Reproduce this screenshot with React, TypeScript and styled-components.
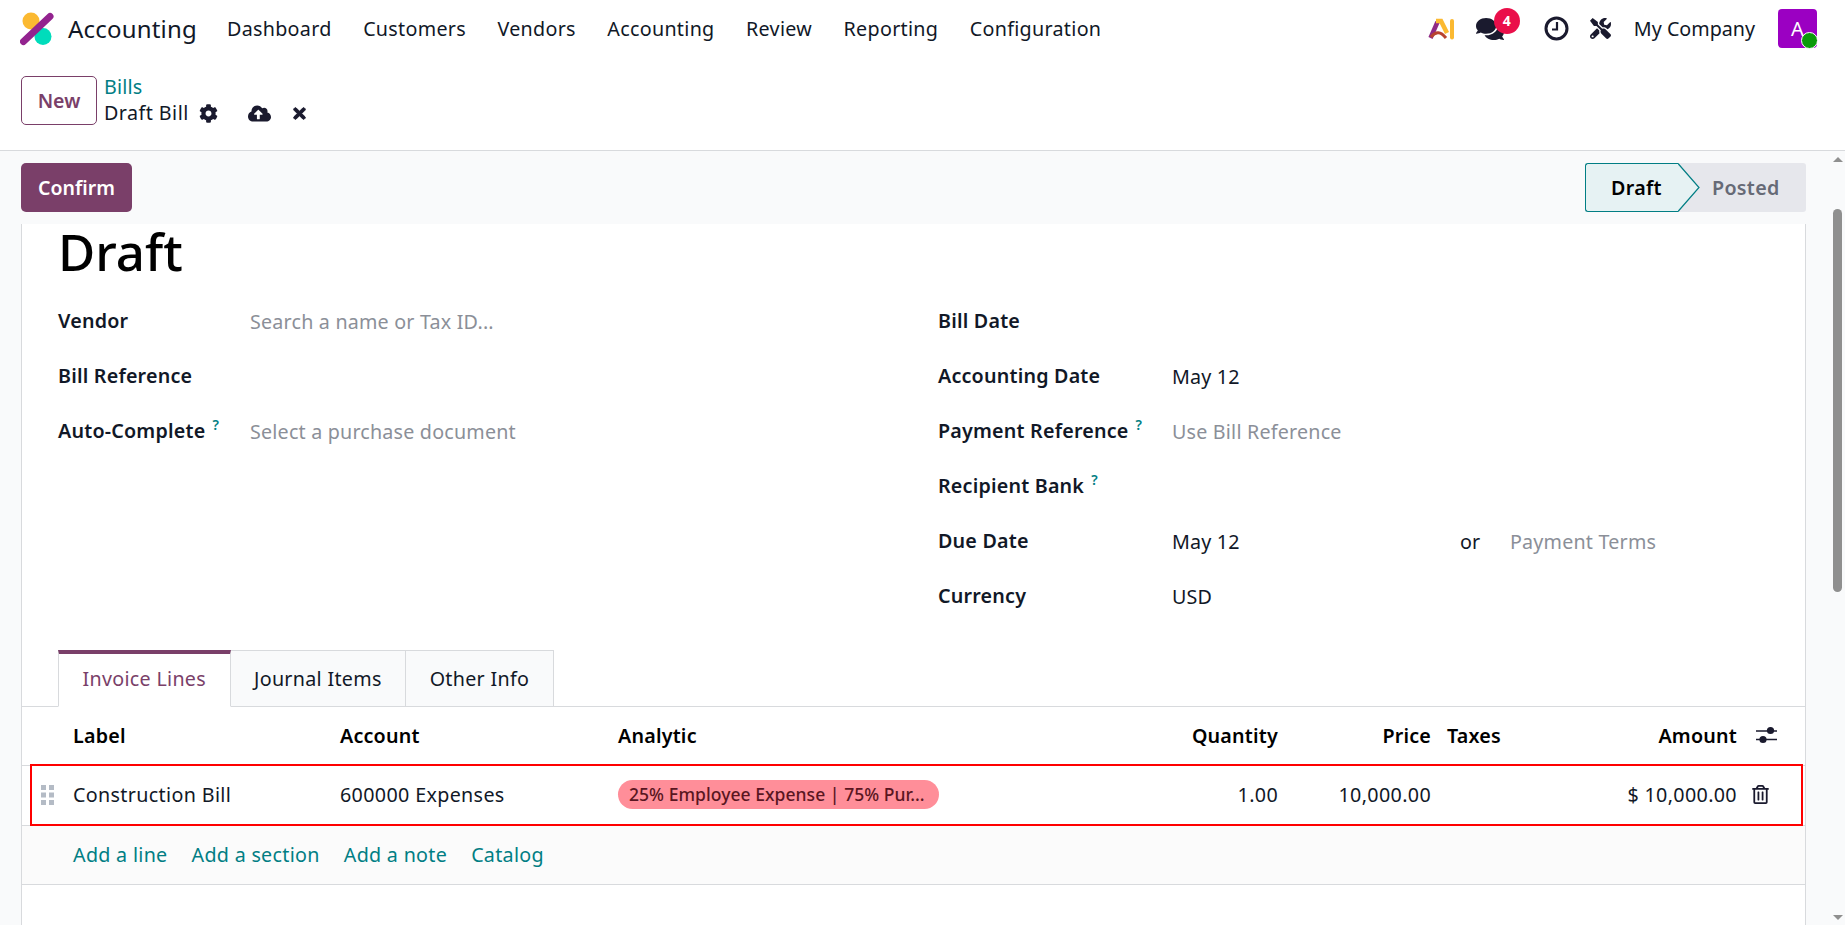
import styled, { createGlobalStyle } from 'styled-components';
import { FaCog, FaCloudUploadAlt, FaTimes, FaComments, FaTools, FaRegTrashAlt } from 'react-icons/fa';

const PRIMARY = '#7a3f69';
const TEAL = '#017e84';
const INK = '#111827';
const LINE = '#d8dadd';

const GlobalStyle = createGlobalStyle`
    html, body {
        margin: 0;
        padding: 0;
        height: 100%;
        overflow: hidden;
        background: #fff;
    }
    body {
        font-family: "Noto Sans", "Open Sans", sans-serif;
        font-size: 19.7px;
        letter-spacing: 0.2px;
        color: ${INK};
    }
    * {
        box-sizing: border-box;
    }
`;

const NAV_LINKS = [
    'Dashboard',
    'Customers',
    'Vendors',
    'Accounting',
    'Review',
    'Reporting',
    'Configuration',
];

const LEFT_FIELDS = [
    { label: 'Vendor', placeholder: 'Search a name or Tax ID...' },
    { label: 'Bill Reference' },
    { label: 'Auto-Complete', help: true, placeholder: 'Select a purchase document' },
];

const RIGHT_FIELDS = [
    { label: 'Bill Date' },
    { label: 'Accounting Date', value: 'May 12' },
    { label: 'Payment Reference', help: true, placeholder: 'Use Bill Reference' },
    { label: 'Recipient Bank', help: true },
];

type FieldProps = {
    label: string;
    help?: boolean;
    value?: string;
    placeholder?: string;
};

// one label + value row of the form
function Field({ label, help, value, placeholder }: FieldProps) {
    return (
        <FieldRow>
            <FieldLabel>
                {label}
                {help && <Help>?</Help>}
            </FieldLabel>
            {value && <Value>{value}</Value>}
            {placeholder && <Placeholder>{placeholder}</Placeholder>}
        </FieldRow>
    );
}

function Logo() {
    return (
        <svg width="36" height="36" viewBox="0 0 36 36">
            <circle cx="11" cy="10" r="8.5" fill="#fbb931" />
            <circle cx="23" cy="25.5" r="8.5" fill="#00dcbb" />
            <path d="M3.5 30.5 L30 5.5" stroke="#93238f" strokeWidth="7" strokeLinecap="round" />
        </svg>
    );
}

function AiLogo() {
    return (
        <svg width="27" height="22" viewBox="0 0 27 22">
            <path d="M2.5 20 L9.5 4" fill="none" stroke="#8f2a86" strokeWidth="4.5" />
            <path d="M8 3 L13 3 L19 15" fill="none" stroke="#fbb931" strokeWidth="4.5" />
            <path d="M3 19 Q10 10 18 20" fill="none" stroke="#b8432f" strokeWidth="3" />
            <path d="M24 3 L24 19.5" stroke="#fbb931" strokeWidth="4" strokeLinecap="round" />
        </svg>
    );
}

function ClockIcon() {
    return (
        <svg width="25" height="25" viewBox="0 0 25 25">
            <circle cx="12.5" cy="12.5" r="10.5" fill="none" stroke="#1a1a2e" strokeWidth="3" />
            <path d="M13 6 L13 13.5 L8 13.5" fill="none" stroke="#1a1a2e" strokeWidth="2.2" />
        </svg>
    );
}

function SlidersIcon() {
    return (
        <svg width="22" height="20" viewBox="0 0 22 20">
            <path d="M0 6 H21 M0 14.5 H21" stroke="#1a1a2e" strokeWidth="1.6" />
            <circle cx="14.5" cy="5.5" r="3.6" fill="#1a1a2e" />
            <circle cx="7" cy="14.5" r="3.6" fill="#1a1a2e" />
        </svg>
    );
}

function GripIcon() {
    return (
        <svg width="13" height="20" viewBox="0 0 13 20" fill="#b4bbc5">
            <rect x="0" y="0" width="5" height="5" />
            <rect x="8" y="0" width="5" height="5" />
            <rect x="0" y="7.5" width="5" height="5" />
            <rect x="8" y="7.5" width="5" height="5" />
            <rect x="0" y="15" width="5" height="5" />
            <rect x="8" y="15" width="5" height="5" />
        </svg>
    );
}

const App = () => {
    return (
        <Page>
            <GlobalStyle />
            <Header>
                <Nav>
                    <Brand>
                        <Logo />
                        <BrandName>Accounting</BrandName>
                    </Brand>
                    <NavLinks>
                        {NAV_LINKS.map((link) => (
                            <span key={link}>{link}</span>
                        ))}
                    </NavLinks>
                    <Systray>
                        <AiSlot>
                            <AiLogo />
                        </AiSlot>
                        <ChatSlot>
                            <FaComments size={28} color="#1a1a2e" />
                            <Badge>4</Badge>
                        </ChatSlot>
                        <ClockSlot>
                            <ClockIcon />
                        </ClockSlot>
                        <ToolsSlot>
                            <FaTools size={21} color="#1a1a2e" />
                        </ToolsSlot>
                        <span>My Company</span>
                        <Avatar>
                            A<Presence />
                        </Avatar>
                    </Systray>
                </Nav>
                <ControlPanel>
                    <NewButton>New</NewButton>
                    <Breadcrumb>
                        <BreadcrumbLink>Bills</BreadcrumbLink>
                        <BreadcrumbCurrent>
                            Draft Bill
                            <FaCog size={19} color="#1a1a2e" />
                            <CloudIcon size={23} color="#1a1a2e" />
                            <FaTimes size={17} color="#1a1a2e" stroke="#1a1a2e" strokeWidth={30} />
                        </BreadcrumbCurrent>
                    </Breadcrumb>
                </ControlPanel>
            </Header>
            <Body>
                <Content>
                    <StatusRow>
                        <ConfirmButton>Confirm</ConfirmButton>
                        <StatusBar>
                            <DraftStep>
                                Draft
                                <svg width="22" height="49" viewBox="0 0 22 49">
                                    <path d="M0 0.5 L21 24.5 L0 48.5" fill="#e6f2f3" stroke={TEAL} strokeWidth="1.2" />
                                </svg>
                            </DraftStep>
                            <PostedStep>Posted</PostedStep>
                        </StatusBar>
                    </StatusRow>
                    <Sheet>
                        <Title>Draft</Title>
                        <FormGrid>
                            <FormGroup $labelWidth={192}>
                                {LEFT_FIELDS.map((field) => (
                                    <Field key={field.label} {...field} />
                                ))}
                            </FormGroup>
                            <FormGroup $labelWidth={234}>
                                {RIGHT_FIELDS.map((field) => (
                                    <Field key={field.label} {...field} />
                                ))}
                                <FieldRow>
                                    <FieldLabel>Due Date</FieldLabel>
                                    <DueDate>
                                        <Value>May 12</Value>
                                        <Value>or</Value>
                                        <Placeholder>Payment Terms</Placeholder>
                                    </DueDate>
                                </FieldRow>
                                <Field label="Currency" value="USD" />
                            </FormGroup>
                        </FormGrid>
                        <Tabs>
                            <Tab $active>Invoice Lines</Tab>
                            <Tab>Journal Items</Tab>
                            <Tab>Other Info</Tab>
                        </Tabs>
                        <LinesHead>
                            <span />
                            <span>Label</span>
                            <span>Account</span>
                            <span>Analytic</span>
                            <RightCell>Quantity</RightCell>
                            <RightCell>Price</RightCell>
                            <TaxCell>Taxes</TaxCell>
                            <RightCell>Amount</RightCell>
                            <ActionCell>
                                <SlidersIcon />
                            </ActionCell>
                        </LinesHead>
                        <LineRow>
                            <HandleCell>
                                <GripIcon />
                            </HandleCell>
                            <span>Construction Bill</span>
                            <span>600000 Expenses</span>
                            <TagCell>
                                <AnalyticTag>25% Employee Expense | 75% Pur...</AnalyticTag>
                            </TagCell>
                            <RightCell>1.00</RightCell>
                            <RightCell>10,000.00</RightCell>
                            <TaxCell />
                            <RightCell>$ 10,000.00</RightCell>
                            <TrashCell>
                                <FaRegTrashAlt size={19} color="#1a1a2e" />
                            </TrashCell>
                        </LineRow>
                        <AddRow>
                            <AddLink>Add a line</AddLink>
                            <AddLink>Add a section</AddLink>
                            <AddLink>Add a note</AddLink>
                            <AddLink>Catalog</AddLink>
                        </AddRow>
                    </Sheet>
                </Content>
                <ScrollBar>
                    <ArrowUp />
                    <Thumb />
                    <ArrowDown />
                </ScrollBar>
            </Body>
        </Page>
    );
};

const Page = styled.div`
    height: 100vh;
    display: flex;
    flex-direction: column;
    overflow: hidden;
`;

const Header = styled.header`
    height: 151px;
    flex: none;
    background: #fff;
    border-bottom: 1px solid ${LINE};
`;

const Nav = styled.nav`
    height: 57px;
    display: flex;
    align-items: center;
    padding-left: 20px;
`;

const Brand = styled.div`
    display: flex;
    align-items: center;
    gap: 12px;
    width: 207px;
`;

const BrandName = styled.span`
    font-size: 24px;
`;

const NavLinks = styled.div`
    display: flex;
    gap: 31.5px;
    letter-spacing: 0.3px;
`;

const Systray = styled.div`
    margin-left: auto;
    margin-right: 28px;
    display: flex;
    align-items: center;
    letter-spacing: 0;
`;

const AiSlot = styled.div`
    display: flex;
    width: 48px;
`;

const ChatSlot = styled.div`
    position: relative;
    display: flex;
    width: 68px;
`;

const Badge = styled.span`
    position: absolute;
    left: 18px;
    top: -7px;
    width: 26px;
    height: 26px;
    border-radius: 50%;
    background: #ea0f4a;
    color: #fff;
    font-size: 14px;
    font-weight: 700;
    display: flex;
    align-items: center;
    justify-content: center;
`;

const ClockSlot = styled.div`
    display: flex;
    width: 46px;
`;

const ToolsSlot = styled.div`
    display: flex;
    width: 44px;
`;

const Avatar = styled.div`
    position: relative;
    width: 39px;
    height: 39px;
    margin-left: 23px;
    border-radius: 4px;
    background: #9b00c2;
    color: #fff;
    font-size: 20px;
    display: flex;
    align-items: center;
    justify-content: center;
`;

const Presence = styled.span`
    position: absolute;
    right: -1px;
    bottom: -1px;
    width: 17px;
    height: 17px;
    border-radius: 50%;
    background: #0a9a0a;
    border: 1px solid #fff;
`;

const ControlPanel = styled.div`
    display: flex;
    padding: 19px 0 0 21px;
    gap: 7px;
`;

const NewButton = styled.button`
    width: 76px;
    height: 49px;
    border: 1px solid ${PRIMARY};
    border-radius: 5px;
    background: #fff;
    color: ${PRIMARY};
    font: 600 19.5px "Noto Sans", sans-serif;
`;

const Breadcrumb = styled.div`
    display: flex;
    flex-direction: column;
    line-height: 26px;
    margin-top: -2px;
`;

const BreadcrumbLink = styled.span`
    color: ${TEAL};
`;

const BreadcrumbCurrent = styled.div`
    display: flex;
    align-items: center;
    gap: 10px;
    letter-spacing: 0.45px;
`;

const CloudIcon = styled(FaCloudUploadAlt)`
    margin-left: 20px;
    margin-right: 10px;
`;

const Body = styled.div`
    flex: 1;
    min-height: 0;
    display: flex;
    background: #f9fafb;
`;

const Content = styled.main`
    flex: 1;
    min-width: 0;
    display: flex;
    flex-direction: column;
    padding: 0 24px 0 21px;
`;

const StatusRow = styled.div`
    height: 73px;
    flex: none;
    padding-top: 12px;
    display: flex;
    justify-content: space-between;
    align-items: flex-start;
`;

const ConfirmButton = styled.button`
    width: 111px;
    height: 49px;
    border: none;
    border-radius: 5px;
    background: ${PRIMARY};
    color: #fff;
    font: 600 19.5px "Noto Sans", sans-serif;
`;

const StatusBar = styled.div`
    display: flex;
    height: 49px;
    width: 221px;
    background: #e6e7ec;
    border-radius: 3px;
    font-weight: 600;
    font-size: 19.7px;
    letter-spacing: 0.3px;
`;

const DraftStep = styled.div`
    position: relative;
    width: 93px;
    display: flex;
    align-items: center;
    padding-left: 25px;
    color: #000;
    background: #e6f2f3;
    border: 1px solid ${TEAL};
    border-right: none;
    border-radius: 3px 0 0 3px;

    svg {
        position: absolute;
        left: 92px;
        top: -1px;
    }
`;

const PostedStep = styled.div`
    margin-left: 34px;
    display: flex;
    align-items: center;
    color: #666a76;
`;

const Sheet = styled.section`
    flex: 1;
    min-height: 0;
    background: #fff;
    border-left: 1px solid ${LINE};
    border-right: 1px solid ${LINE};
`;

const Title = styled.h1`
    margin: 0 0 15px 0;
    padding-left: 36px;
    height: 54px;
    line-height: 54px;
    font-size: 51px;
    font-weight: 500;
    letter-spacing: 0;
    color: #000;
`;

const FormGrid = styled.div`
    display: grid;
    grid-template-columns: 880px 1fr;
    padding-left: 36px;
    height: 357px;
`;

const FormGroup = styled.div<{ $labelWidth: number }>`
    display: grid;
    grid-auto-rows: 55px;
    align-content: start;
    --label-width: ${(p) => p.$labelWidth}px;
`;

const FieldRow = styled.div`
    display: flex;
    align-items: center;
`;

const FieldLabel = styled.label`
    width: var(--label-width);
    flex: none;
    font-weight: 600;
`;

const Help = styled.sup`
    margin-left: 7px;
    font-size: 14px;
    color: ${TEAL};
    font-weight: 600;
    line-height: 0;
`;

const Value = styled.span`
    padding-top: 2px;
`;

const Placeholder = styled(Value)`
    color: #8b8f98;
`;

const DueDate = styled.div`
    display: grid;
    grid-template-columns: 288px 50px auto;
    align-items: center;
`;

const Tabs = styled.div`
    display: flex;
    height: 57px;
    padding-left: 36px;
    border-bottom: 1px solid ${LINE};
`;

const Tab = styled.div<{ $active?: boolean }>`
    height: 57px;
    display: flex;
    align-items: center;
    padding: 0 23.5px;
    letter-spacing: 0.3px;
    border: 1px solid ${LINE};
    border-left-width: ${(p) => (p.$active ? 1 : 0)}px;
    background: ${(p) => (p.$active ? '#fff' : '#f9fafb')};
    color: ${(p) => (p.$active ? PRIMARY : INK)};
    ${(p) =>
        p.$active &&
        `
        border-top: 4px solid ${PRIMARY};
        border-bottom-color: #fff;
        padding-bottom: 3px;
    `}
`;

const COLUMNS = '51px 267px 278px 522px 138px 153px 132px 174px 1fr';

const LinesHead = styled.div`
    display: grid;
    grid-template-columns: ${COLUMNS};
    align-items: center;
    height: 59px;
    padding-bottom: 2px;
    font-weight: 600;
    color: #000;
    border-bottom: 1px solid ${LINE};
`;

const LineRow = styled.div`
    position: relative;
    display: grid;
    grid-template-columns: ${COLUMNS};
    align-items: center;
    height: 60px;
    padding-bottom: 2px;
    letter-spacing: 0.35px;
    border-bottom: 1px solid ${LINE};

    // the red highlight box drawn on top of the row
    &::after {
        content: '';
        position: absolute;
        left: 8px;
        right: 2px;
        top: -2px;
        bottom: -1px;
        border: 2px solid #f00;
    }
`;

const RightCell = styled.span`
    text-align: right;
`;

const TaxCell = styled.span`
    padding-left: 16px;
`;

const ActionCell = styled.span`
    display: flex;
    padding-left: 19px;
`;

const TrashCell = styled.span`
    display: flex;
    padding-left: 14px;
`;

const HandleCell = styled.span`
    display: flex;
    padding-left: 19px;
`;

const TagCell = styled.span`
    display: flex;
`;

const AnalyticTag = styled.span`
    width: 321px;
    height: 29px;
    line-height: 29px;
    padding-left: 11px;
    border-radius: 15px;
    background: #ff8e99;
    color: #5a1621;
    font-size: 17.5px;
    font-weight: 500;
    letter-spacing: 0.05px;
    white-space: nowrap;
`;

const AddRow = styled.div`
    display: flex;
    align-items: center;
    gap: 24px;
    height: 59px;
    padding-bottom: 2px;
    padding-left: 51px;
    letter-spacing: 0.3px;
    background: #fbfbfb;
    border-bottom: 1px solid ${LINE};
`;

const AddLink = styled.span`
    color: ${TEAL};
`;

const ScrollBar = styled.div`
    width: 15px;
    flex: none;
    display: flex;
    flex-direction: column;
    align-items: center;
    padding: 6px 0 5px;
    background: #f9fafb;
`;

const ArrowUp = styled.div`
    border-left: 5px solid transparent;
    border-right: 5px solid transparent;
    border-bottom: 5px solid #8f8f8f;
`;

const Thumb = styled.div`
    width: 9px;
    height: 383px;
    margin-top: 47px;
    margin-bottom: auto;
    border-radius: 5px;
    background: #8f8f8f;
`;

const ArrowDown = styled.div`
    border-left: 5px solid transparent;
    border-right: 5px solid transparent;
    border-top: 5px solid #8f8f8f;
`;

export default App;
